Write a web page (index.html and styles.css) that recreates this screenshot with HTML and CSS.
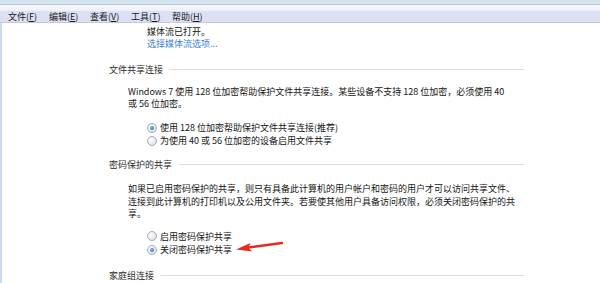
FILE: index.html
```html
<!DOCTYPE html>
<html lang="zh-CN">
<head>
<meta charset="utf-8">
<title>高级共享设置</title>
<link rel="stylesheet" href="styles.css">
</head>
<body>
<div class="chrome-top"></div>
<div class="chrome-gap"></div>
<nav class="menubar">
  <span class="menu-item">文件(<u>F</u>)</span>
  <span class="menu-item">编辑(<u>E</u>)</span>
  <span class="menu-item">查看(<u>V</u>)</span>
  <span class="menu-item">工具(<u>T</u>)</span>
  <span class="menu-item">帮助(<u>H</u>)</span>
</nav>
<main class="main">
  <div class="media">
    <div class="line">媒体流已打开。</div>
    <a class="link line">选择媒体流选项...</a>
  </div>

  <section class="group g1">
    <div class="group-head"><span class="group-title">文件共享连接</span><span class="rule"></span></div>
    <p class="desc d1">Windows 7 使用 128 位加密帮助保护文件共享连接。某些设备不支持 128 位加密，必须使用 40<br>或 56 位加密。</p>
    <div class="options o1">
      <label class="option"><span class="radio checked"></span>使用 128 位加密帮助保护文件共享连接(推荐)</label>
      <label class="option"><span class="radio"></span>为使用 40 或 56 位加密的设备启用文件共享</label>
    </div>
  </section>

  <section class="group g2">
    <div class="group-head"><span class="group-title">密码保护的共享</span><span class="rule"></span></div>
    <p class="desc d2">如果已启用密码保护的共享，则只有具备此计算机的用户帐户和密码的用户才可以访问共享文件、<br>连接到此计算机的打印机以及公用文件夹。若要使其他用户具备访问权限，必须关闭密码保护的共<br>享。</p>
    <div class="options o2">
      <label class="option"><span class="radio"></span>启用密码保护共享</label>
      <label class="option"><span class="radio checked"></span>关闭密码保护共享</label>
    </div>
  </section>

  <section class="group g3">
    <div class="group-head"><span class="group-title">家庭组连接</span><span class="rule"></span></div>
  </section>

  <svg class="arrow" width="50" height="14" viewBox="0 0 50 14" aria-hidden="true">
    <path d="M47 2 L14 6.4" stroke="#ea2a1f" stroke-width="2.4" fill="none" stroke-linecap="round"/>
    <path d="M1 8.6 L15.5 2 L13.4 6.5 L17 10.6 Z" fill="#ea2a1f"/>
  </svg>
</main>
</body>
</html>
```

FILE: styles.css
```css
html, body {
  margin: 0;
  padding: 0;
  background: #ffffff;
}
body {
  font-family: "Noto Sans CJK SC", "Microsoft YaHei", sans-serif;
  font-size: 9px;
  color: #141414;
  width: 600px;
  height: 283px;
  overflow: hidden;
}
.chrome-top {
  height: 4px;
  background: #d6e4ef;
  border-bottom: 1px solid #b9cbd9;
}
.chrome-gap {
  height: 6px;
  background: linear-gradient(#f7f7fc, #eef0f9);
}
.menubar {
  height: 11px;
  background: #dce0f2;
  border-bottom: 1px solid #c6c9d9;
  display: flex;
  align-items: center;
  padding-left: 8px;
  gap: 12px;
  line-height: 11px;
}
.menu-item {
  width: 29px;
  white-space: nowrap;
  color: #1a1a1a;
}
.menu-item u {
  text-decoration: underline;
  text-underline-offset: 1px;
}
.main {
  position: relative;
  border-left: 2px solid #c9dbf1;
  height: 260px;
  box-sizing: border-box;
  padding-top: 3px;
}
.media {
  padding-left: 145px;
  line-height: 12px;
}
.line {
  display: block;
}
.link {
  color: #3a7fd3;
}
.group-head {
  display: flex;
  align-items: center;
  padding-left: 107px;
  width: 415px;
  line-height: 12px;
  color: #2a2a2a;
}
.group-title {
  white-space: nowrap;
}
.rule {
  flex: 1;
  height: 1px;
  background: #dcdcdc;
  margin-left: 7px;
  margin-top: -1px;
}
.g1 { margin-top: 14px; }
.g2 { margin-top: 12px; }
.g3 { margin-top: 13px; }
.desc {
  margin: 0;
  padding-left: 126px;
  white-space: nowrap;
  line-height: 12px;
}
.d1 { margin-top: 10px; }
.d2 { margin-top: 12px; line-height: 12.5px; }
.options {
  padding-left: 145px;
  display: flex;
  flex-direction: column;
}
.o1 { margin-top: 11px; }
.o2 { margin-top: 9px; }
.option {
  display: flex;
  align-items: center;
  height: 13px;
  white-space: nowrap;
}
.o2 .option { height: 13.5px; }
.radio {
  width: 8px;
  height: 8px;
  border-radius: 50%;
  border: 1px solid #a4acb5;
  background: radial-gradient(circle at 35% 35%, #ffffff, #e1e4e8 70%, #ced3d9);
  margin-right: 3px;
  flex: none;
  position: relative;
}
.radio.checked::after {
  content: "";
  position: absolute;
  left: 2px;
  top: 2px;
  width: 4px;
  height: 4px;
  border-radius: 50%;
  background: radial-gradient(circle at 40% 35%, #7fb3e8, #1f5fae);
}
.arrow {
  position: absolute;
  left: 233px;
  top: 218px;
}
```
